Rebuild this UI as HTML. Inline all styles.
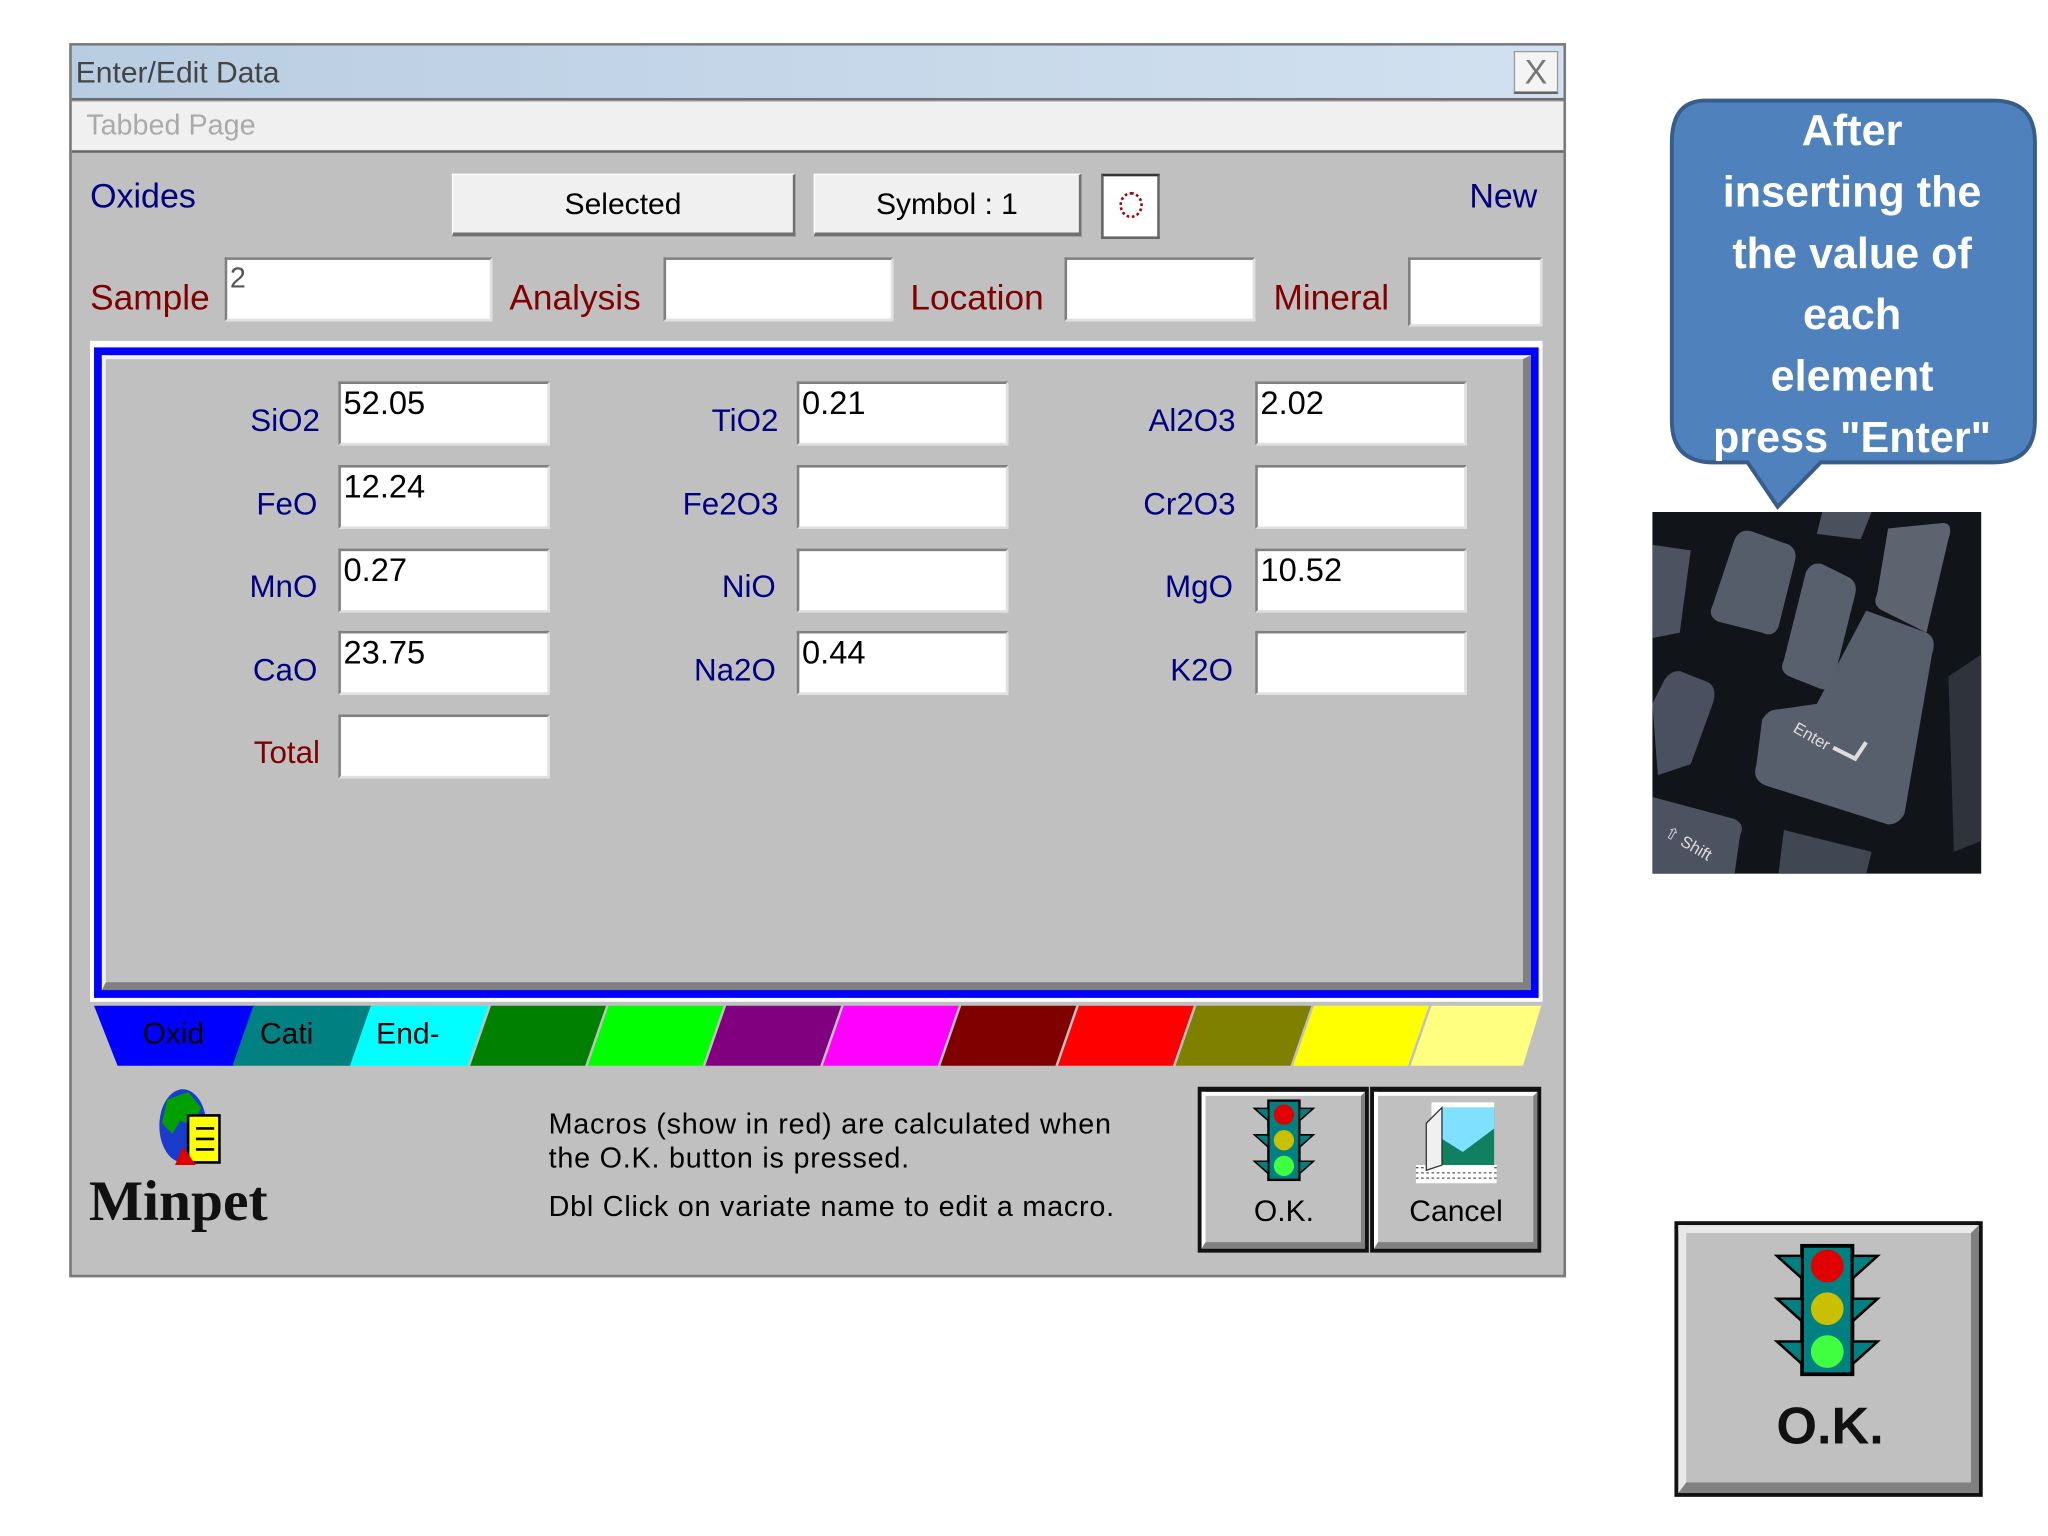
<!DOCTYPE html>
<html><head><meta charset="utf-8">
<style>
*{margin:0;padding:0;box-sizing:border-box}
html,body{width:2048px;height:1536px;overflow:hidden;background:#fff}
#s{position:absolute;left:0;top:0;width:1568px;height:1176px;transform:scale(1.30612);transform-origin:0 0;font-family:"Liberation Sans Narrow","Liberation Sans",sans-serif}
.a{position:absolute}
.t{position:absolute;white-space:nowrap;line-height:1}
.in{position:absolute;background:#fff;border-top:2px solid #808080;border-left:2px solid #808080;border-bottom:2px solid #e0e0e0;border-right:2px solid #e0e0e0;font-size:25px;padding:3px 2px;line-height:1}
.btn{position:absolute;background:#f0f0f0;border:1px solid #fff;border-bottom:3px solid #707070;border-right:2px solid #707070;text-align:center;font-size:23px}
.lb{position:absolute;font-size:24px;color:#000080;text-align:right;width:120px;white-space:nowrap}
.rd{color:#800000}
</style></head><body><div id="s">
<div class="a" style="left:53px;top:33px;width:1146px;height:945px;background:#c0c0c0;border:2px solid #7a7a7a"></div>
<div class="a" style="left:55px;top:35px;width:1142px;height:42px;background:linear-gradient(90deg,#b9cde2,#d2e1f0);border-bottom:2px solid #6d6d6d"></div>
<div class="t" style="left:58px;top:44px;font-size:23px;color:#444">Enter/Edit Data</div>
<div class="a" style="left:1159px;top:39px;width:34px;height:33px;background:#f4f4f4;border:1px solid #999;border-bottom:2px solid #666;text-align:center;font-size:26px;color:#777;line-height:30px">X</div>
<div class="a" style="left:55px;top:78px;width:1142px;height:39px;background:#f0f0f0;border-bottom:2px solid #666"></div>
<div class="t" style="left:66px;top:85px;font-size:22px;color:#aaa">Tabbed Page</div>

<div class="t" style="left:69px;top:137px;font-size:26px;color:#000080">Oxides</div>
<div class="btn" style="left:346px;top:133px;width:263px;height:48px;line-height:44px">Selected</div>
<div class="btn" style="left:623px;top:133px;width:205px;height:48px;line-height:44px">Symbol : 1</div>
<div class="a" style="left:843px;top:133px;width:45px;height:50px;background:#fff;border:2px solid #666;border-top:2px solid #333"></div>
<div class="a" style="left:857px;top:147px;width:18px;height:20px;border:2px dotted #a00000;border-radius:50%"></div>
<div class="t" style="left:1125px;top:137px;font-size:26px;color:#000080">New</div>

<div class="t rd" style="left:69px;top:215px;font-size:27px">Sample</div>
<div class="in" style="left:172px;top:197px;width:205px;height:49px;color:#555;font-size:22px">2</div>
<div class="t rd" style="left:390px;top:215px;font-size:27px">Analysis</div>
<div class="in" style="left:508px;top:197px;width:176px;height:49px"></div>
<div class="t rd" style="left:697px;top:215px;font-size:27px">Location</div>
<div class="in" style="left:815px;top:197px;width:146px;height:49px"></div>
<div class="t rd" style="left:975px;top:215px;font-size:27px">Mineral</div>
<div class="in" style="left:1078px;top:197px;width:103px;height:53px"></div>

<div class="a" style="left:69px;top:261px;width:1112px;height:506px;background:#fff"></div>
<div class="a" style="left:72px;top:266px;width:1106px;height:498px;border:6px solid #0000ff;background:#c0c0c0"></div>
<div class="a" style="left:78px;top:272px;width:1094px;height:486px;border-top:3px solid #f0f0f0;border-left:3px solid #f0f0f0;border-bottom:6px solid #808080;border-right:6px solid #808080"></div>

<div class="lb" style="left:125px;top:309px">SiO2</div><div class="in" style="left:259px;top:292px;width:162px;height:49px">52.05</div>
<div class="lb" style="left:123px;top:373px">FeO</div><div class="in" style="left:259px;top:356px;width:162px;height:49px">12.24</div>
<div class="lb" style="left:123px;top:436px">MnO</div><div class="in" style="left:259px;top:420px;width:162px;height:49px">0.27</div>
<div class="lb" style="left:123px;top:500px">CaO</div><div class="in" style="left:259px;top:483px;width:162px;height:49px">23.75</div>
<div class="lb rd" style="left:125px;top:563px">Total</div><div class="in" style="left:259px;top:547px;width:162px;height:49px"></div>

<div class="lb" style="left:476px;top:309px">TiO2</div><div class="in" style="left:610px;top:292px;width:162px;height:49px">0.21</div>
<div class="lb" style="left:476px;top:373px">Fe2O3</div><div class="in" style="left:610px;top:356px;width:162px;height:49px"></div>
<div class="lb" style="left:474px;top:436px">NiO</div><div class="in" style="left:610px;top:420px;width:162px;height:49px"></div>
<div class="lb" style="left:474px;top:500px">Na2O</div><div class="in" style="left:610px;top:483px;width:162px;height:49px">0.44</div>

<div class="lb" style="left:826px;top:309px">Al2O3</div><div class="in" style="left:961px;top:292px;width:162px;height:49px">2.02</div>
<div class="lb" style="left:826px;top:373px">Cr2O3</div><div class="in" style="left:961px;top:356px;width:162px;height:49px"></div>
<div class="lb" style="left:824px;top:436px">MgO</div><div class="in" style="left:961px;top:420px;width:162px;height:49px">10.52</div>
<div class="lb" style="left:824px;top:500px">K2O</div><div class="in" style="left:961px;top:483px;width:162px;height:49px"></div>

<!-- tabs: trapezoids -->
<svg class="a" style="left:70px;top:768px" width="1112" height="50">
<polygon points="2,2 126,2 110,48 20,48" fill="#0000ff"/>
<polygon points="124,2 214,2 198,48 108,48" fill="#008080"/>
<polygon points="214,2 304,2 288,48 198,48" fill="#00ffff"/>
<polygon points="306,2 394,2 378,48 290,48" fill="#008000"/>
<polygon points="396,2 484,2 468,48 380,48" fill="#00ff00"/>
<polygon points="486,2 574,2 558,48 470,48" fill="#800080"/>
<polygon points="576,2 664,2 648,48 560,48" fill="#ff00ff"/>
<polygon points="666,2 754,2 738,48 650,48" fill="#800000"/>
<polygon points="756,2 844,2 828,48 740,48" fill="#ff0000"/>
<polygon points="846,2 934,2 918,48 830,48" fill="#808000"/>
<polygon points="936,2 1024,2 1008,48 920,48" fill="#ffff00"/>
<polygon points="1026,2 1110,2 1096,48 1010,48" fill="#ffff80"/>
</svg>
<div class="t" style="left:109px;top:780px;font-size:23px">Oxid</div>
<div class="t" style="left:199px;top:780px;font-size:23px">Cati</div>
<div class="t" style="left:288px;top:780px;font-size:23px">End-</div>

<svg class="a" style="left:114px;top:832px" width="60" height="64">
<ellipse cx="26" cy="30" rx="18" ry="28" fill="#1a3ccc"/>
<path d="M14 10 L30 4 L40 16 L34 30 L24 26 L18 36 L10 28 Z" fill="#00a000"/>
<rect x="30" y="22" width="24" height="36" fill="#ffff00" stroke="#000" stroke-width="2"/>
<line x1="36" y1="32" x2="50" y2="32" stroke="#000" stroke-width="2"/><line x1="36" y1="40" x2="50" y2="40" stroke="#000" stroke-width="2"/><line x1="36" y1="48" x2="50" y2="48" stroke="#000" stroke-width="2"/>
<path d="M26 46 L36 60 L20 60 Z" fill="#e00000"/>
</svg>
<div class="t" style="left:68px;top:898px;font-size:44px;font-family:'Liberation Serif',serif;font-weight:bold;color:#111">Minpet</div>

<div class="t" style="left:420px;top:850px;font-size:22px;letter-spacing:0.6px">Macros (show in red) are calculated when</div>
<div class="t" style="left:420px;top:876px;font-size:22px;letter-spacing:0.6px">the O.K. button is pressed.</div>
<div class="t" style="left:420px;top:913px;font-size:22px;letter-spacing:0.6px">Dbl Click on variate name to edit a macro.</div>

<div class="a" style="left:917px;top:832px;width:131px;height:127px;background:#c0c0c0;border:3px solid #111;border-top:4px solid #111"><div class="a" style="left:0;top:0;right:0;bottom:0;border-top:3px solid #fff;border-left:3px solid #fff;border-bottom:5px solid #808080;border-right:3px solid #808080"></div></div>
<div class="a" style="left:1049px;top:832px;width:131px;height:127px;background:#c0c0c0;border:3px solid #111;border-top:4px solid #111"><div class="a" style="left:0;top:0;right:0;bottom:0;border-top:3px solid #fff;border-left:3px solid #fff;border-bottom:5px solid #808080;border-right:3px solid #808080"></div></div>
<svg class="a" style="left:958px;top:840px" width="50" height="66" viewBox="0 0 84 110">
<rect x="22" y="4" width="40" height="102" fill="#008080" stroke="#000" stroke-width="3"/>
<polygon points="4,14 22,14 22,30" fill="#008080" stroke="#000" stroke-width="2"/><polygon points="80,14 62,14 62,30" fill="#008080" stroke="#000" stroke-width="2"/>
<polygon points="4,48 22,48 22,64" fill="#008080" stroke="#000" stroke-width="2"/><polygon points="80,48 62,48 62,64" fill="#008080" stroke="#000" stroke-width="2"/>
<polygon points="4,82 22,82 22,98" fill="#008080" stroke="#000" stroke-width="2"/><polygon points="80,82 62,82 62,98" fill="#008080" stroke="#000" stroke-width="2"/>
<circle cx="42" cy="22" r="13" fill="#e00000"/><circle cx="42" cy="55" r="13" fill="#c8c000"/><circle cx="42" cy="88" r="13" fill="#40ff40"/>
</svg>
<div class="t" style="left:960px;top:916px;font-size:23px">O.K.</div>
<svg class="a" style="left:1084px;top:842px" width="62" height="64">
<rect x="0" y="50" width="62" height="14" fill="#fff"/><path d="M0 52h62M0 56h62M0 60h62" stroke="#555" stroke-dasharray="2 2"/>
<rect x="12" y="2" width="48" height="52" fill="#fff"/>
<rect x="20" y="6" width="40" height="44" fill="#108060"/><polygon points="20,6 60,6 60,22 36,40 20,30" fill="#7fe0ff"/>
<polygon points="8,18 20,6 20,50 8,54" fill="#f0f0f0" stroke="#333"/>
</svg>
<div class="t" style="left:1079px;top:916px;font-size:23px">Cancel</div>

<svg class="a" style="left:1276px;top:74px" width="286" height="320">
<path d="M30 3 H250 Q282 3 282 35 V248 Q282 280 250 280 H118 L85 314 L62 280 H36 Q4 280 4 248 V35 Q4 3 30 3 Z" fill="#4f81bd" stroke="#385d8a" stroke-width="3"/>
</svg>
<div class="a" style="left:1280px;top:76px;width:276px;text-align:center;color:#fff;font-weight:bold;font-size:33px;line-height:47px">After<br>inserting the<br>the value of<br>each<br>element<br>press "Enter"</div>

<svg class="a" style="left:1265px;top:392px" width="252" height="277" viewBox="0 0 120 132">
<rect width="120" height="132" fill="#111419"/>
<path d="M30 10 Q32 6 36 7 L50 12 Q53 14 52 18 L46 42 Q44 46 40 44 L24 40 Q20 38 22 34 Z" fill="#555c6a"/>
<path d="M56 22 Q58 18 62 19 L72 24 Q75 26 74 30 L66 62 Q64 66 60 64 L50 60 Q46 58 48 54 Z" fill="#585f6d"/>
<path d="M86 6 L106 4 Q110 4 108 10 L100 44 L84 36 Q80 34 82 30 Z" fill="#5d6470"/>
<path d="M62 0 L80 0 L76 10 L60 8 Z" fill="#4a505c"/>
<path d="M0 12 L14 14 L10 44 L0 46 Z" fill="#4c5260"/>
<path d="M4 62 Q6 58 10 58 L20 62 Q24 64 22 70 L14 92 L2 96 L0 70 Z" fill="#4a5060"/>
<path d="M60 70 L78 36 L100 44 Q104 46 102 52 L92 110 Q90 114 86 114 L42 100 Q36 98 38 92 L40 76 Q42 72 46 72 Z" fill="#575e6c"/>
<path d="M0 104 L30 112 Q34 114 32 118 L30 132 L0 132 Z" fill="#4c5260"/>
<path d="M48 116 L80 124 L78 132 L46 132 Z" fill="#404652"/>
<path d="M108 60 L120 52 L120 120 L110 124 Z" fill="#2e333c"/>
<text x="51" y="80" fill="#ddd" font-size="6" font-family="Liberation Sans" transform="rotate(30 51 80)">Enter</text>
<path d="M66 86 L74 90 L78 84" stroke="#ddd" stroke-width="1.5" fill="none"/>
<text x="4" y="118" fill="#ddd" font-size="6" font-family="Liberation Sans" transform="rotate(30 4 118)">⇧ Shift</text>
</svg>

<div class="a" style="left:1282px;top:935px;width:236px;height:211px;background:#c0c0c0;border:3px solid #111"><div class="a" style="left:0;top:0;right:0;bottom:0;border-top:6px solid #e8e8e8;border-left:6px solid #e8e8e8;border-bottom:8px solid #808080;border-right:6px solid #808080"></div></div>
<svg class="a" style="left:1357px;top:950px" width="84" height="106" viewBox="0 0 84 110">
<rect x="22" y="4" width="40" height="102" fill="#008080" stroke="#000" stroke-width="3"/>
<polygon points="2,12 22,12 22,30" fill="#008080" stroke="#000" stroke-width="2"/><polygon points="82,12 62,12 62,30" fill="#008080" stroke="#000" stroke-width="2"/>
<polygon points="2,46 22,46 22,64" fill="#008080" stroke="#000" stroke-width="2"/><polygon points="82,46 62,46 62,64" fill="#008080" stroke="#000" stroke-width="2"/>
<polygon points="2,80 22,80 22,98" fill="#008080" stroke="#000" stroke-width="2"/><polygon points="82,80 62,80 62,98" fill="#008080" stroke="#000" stroke-width="2"/>
<circle cx="42" cy="20" r="13" fill="#e00000"/><circle cx="42" cy="54" r="13" fill="#c8c000"/><circle cx="42" cy="88" r="13" fill="#40ff40"/>
</svg>
<div class="t" style="left:1360px;top:1072px;font-size:40px;font-weight:bold;color:#111">O.K.</div>
</div></body></html>
